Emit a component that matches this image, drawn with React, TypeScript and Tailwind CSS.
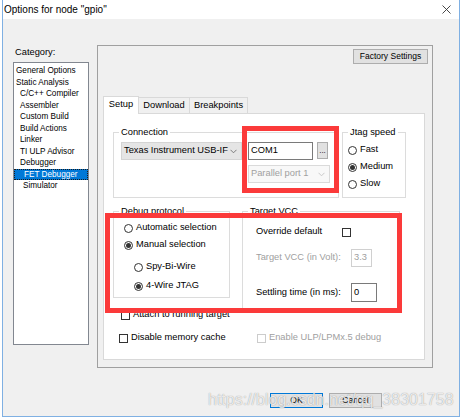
import React from 'react';

const categories: { label: string; level: number; selected?: boolean }[] = [
  { label: 'General Options', level: 0 },
  { label: 'Static Analysis', level: 0 },
  { label: 'C/C++ Compiler', level: 1 },
  { label: 'Assembler', level: 1 },
  { label: 'Custom Build', level: 1 },
  { label: 'Build Actions', level: 1 },
  { label: 'Linker', level: 1 },
  { label: 'TI ULP Advisor', level: 1 },
  { label: 'Debugger', level: 1 },
  { label: 'FET Debugger', level: 2, selected: true },
  { label: 'Simulator', level: 2 },
];

const indent = ['pl-[2px]', 'pl-[6px]', 'pl-[9px]'];

function Chevron({ light }: { light?: boolean }) {
  return (
    <svg width="7" height="5" viewBox="0 0 7 5" className="shrink-0">
      <path d="M0.5 0.8 L3.5 3.8 L6.5 0.8" fill="none" stroke={light ? '#c4c4c4' : '#707070'} strokeWidth="0.9" />
    </svg>
  );
}

function Radio({ label, checked }: { label: string; checked?: boolean }) {
  return (
    <div className="flex items-center h-[12px]">
      <span className="w-[9px] h-[9px] rounded-full border border-[#333] bg-white flex items-center justify-center shrink-0">
        {checked && <span className="w-[5px] h-[5px] rounded-full bg-[#333]" />}
      </span>
      <span className="ml-[3px] whitespace-nowrap">{label}</span>
    </div>
  );
}

function Check({ disabled }: { disabled?: boolean }) {
  return (
    <span
      className={`w-[9px] h-[9px] border bg-white shrink-0 ${disabled ? 'border-[#cccccc]' : 'border-[#333]'}`}
    />
  );
}

function Group({ label, className, children }: { label: string; className: string; children?: React.ReactNode }) {
  return (
    <div className={`relative border border-[#dcdcdc] shrink-0 ${className}`}>
      <span className="absolute left-[5px] top-[-7px] bg-white px-[2px] leading-[12px] whitespace-nowrap">{label}</span>
      {children}
    </div>
  );
}

export default function App() {
  return (
    <div className="relative w-[461px] h-[420px] bg-white overflow-hidden font-['Liberation_Sans',Arial,sans-serif] text-black">
      <div className="ml-[2px] w-[458px] h-[417px] border-x border-b border-[#7fb0e3] flex flex-col">
        {/* title bar */}
        <div className="h-[19px] bg-white flex items-center justify-between shrink-0">
          <span className="pl-[1px] text-[10px] leading-[19px]">Options for node "gpio"</span>
          <svg width="9" height="9" viewBox="0 0 9 9" className="mr-[8px]">
            <path d="M0.5 0.5 L8.5 8.5 M8.5 0.5 L0.5 8.5" stroke="#333" strokeWidth="0.9" />
          </svg>
        </div>

        {/* body */}
        <div className="flex-1 bg-[#f0f0f0] flex flex-col text-[9.3px]">
          <div className="flex pt-[26px]">
            {/* category column */}
            <div className="ml-[10px] w-[76px] pt-[1px] shrink-0">
              <div className="h-[13px] leading-[13px] pl-[2px]">Category:</div>
              <div className="mt-[3px] h-[283px] border border-[#828790] bg-white pt-[2px] text-[8.2px]">
                {categories.map((c) =>
                  c.selected ? (
                    <div
                      key={c.label}
                      className="mx-[0px] h-[11.5px] leading-[10px] bg-[#0078d7] text-white border border-dotted border-[#1a1a1a] pl-[9px] whitespace-nowrap"
                    >
                      {c.label}
                    </div>
                  ) : (
                    <div key={c.label} className={`h-[11.5px] leading-[11.5px] whitespace-nowrap ${indent[c.level]}`}>
                      {c.label}
                    </div>
                  )
                )}
              </div>
            </div>

            {/* options panel */}
            <div className="ml-[8px] w-[336px] h-[323px] border border-[#a0a0a0] flex flex-col shrink-0">
              <div className="flex justify-end pt-[3px] pr-[4px]">
                <div className="w-[75px] h-[15px] bg-[#e1e1e1] border border-[#adadad] flex items-center justify-center text-[8.5px]">
                  Factory Settings
                </div>
              </div>

              {/* tabs */}
              <div className="ml-[5px] mt-[31px] flex items-end h-[18px]">
                <div className="w-[36px] h-[18px] bg-white border-x border-t border-[#d9d9d9] flex items-center justify-center relative z-10 -mb-[1px] pb-[1px]">
                  Setup
                </div>
                <div className="w-[51px] h-[16px] bg-[#f0f0f0] border-t border-r border-[#d9d9d9] flex items-center justify-center">
                  Download
                </div>
                <div className="w-[58px] h-[16px] bg-[#f0f0f0] border-t border-r border-[#d9d9d9] flex items-center justify-center">
                  Breakpoints
                </div>
              </div>

              <div className="ml-[5px] w-[322px] h-[247px] bg-white border border-[#d9d9d9] flex flex-col">
                {/* row 1 */}
                <div className="flex mt-[18px]">
                  <Group label="Connection" className="ml-[9px] w-[226px] h-[66px]">
                    <div className="flex pl-[7px] pt-[9px]">
                      <div className="w-[121px] h-[18px] bg-[#e5e5e5] border border-[#d4d4d4] flex items-center justify-between pl-[2px] pr-[4px]">
                        <span className="whitespace-nowrap">Texas Instrument USB-IF</span>
                        <Chevron />
                      </div>
                      <div className="ml-[6px] flex flex-col">
                        <div className="flex items-start">
                          <div className="w-[65px] h-[18px] border border-[#7a7a7a] bg-white flex items-center pl-[2px]">COM1</div>
                          <div className="ml-[4px] w-[11px] h-[17px] bg-[#e1e1e1] border border-[#adadad] flex items-center justify-center text-[8px] leading-none">
                            ...
                          </div>
                        </div>
                        <div className="mt-[5px] w-[82px] h-[18px] bg-[#f8f8f8] border border-[#dadada] text-[#a0a0a0] flex items-center justify-between pl-[2px] pr-[4px]">
                          <span className="whitespace-nowrap">Parallel port 1</span>
                          <Chevron light />
                        </div>
                      </div>
                    </div>
                  </Group>
                  <Group label="Jtag speed" className="ml-[3px] w-[64px] h-[66px]">
                    <div className="flex flex-col pl-[5px] pt-[11px] gap-[5px]">
                      <Radio label="Fast" />
                      <Radio label="Medium" checked />
                      <Radio label="Slow" />
                    </div>
                  </Group>
                </div>

                {/* row 2 */}
                <div className="flex items-start mt-[13px]">
                  <Group label="Debug protocol" className="ml-[9px] w-[117px] h-[87px]">
                    <div className="flex flex-col pl-[10px] pt-[10px]">
                      <Radio label="Automatic selection" />
                      <div className="mt-[5px]">
                        <Radio label="Manual selection" checked />
                      </div>
                      <div className="mt-[10px] pl-[10px]">
                        <Radio label="Spy-Bi-Wire" />
                      </div>
                      <div className="mt-[7px] pl-[10px]">
                        <Radio label="4-Wire JTAG" checked />
                      </div>
                    </div>
                  </Group>
                  <Group label="Target VCC" className="ml-[12px] w-[158px] h-[98px]">
                    <div className="flex flex-col pl-[13px] pt-[11px]">
                      <div className="flex items-center h-[18px]">
                        <span className="w-[86px] whitespace-nowrap">Override default</span>
                        <Check />
                      </div>
                      <div className="flex items-center h-[18px] mt-[8px] text-[#a0a0a0]">
                        <span className="w-[95px] whitespace-nowrap">Target VCC (in Volt):</span>
                        <div className="w-[21px] h-[18px] border border-[#d0d0d0] flex items-center pl-[2px]">3.3</div>
                      </div>
                      <div className="flex items-center h-[19px] mt-[16px]">
                        <span className="w-[95px] whitespace-nowrap">Settling time (in ms):</span>
                        <div className="w-[26px] h-[19px] border border-[#7a7a7a] bg-white flex items-center pl-[2px]">0</div>
                      </div>
                    </div>
                  </Group>
                </div>

                {/* row 3 */}
                <div className="flex items-center h-[10px] mt-[1px] ml-[17px]">
                  <Check />
                  <span className="ml-[3px] whitespace-nowrap">Attach to running target</span>
                </div>

                {/* row 4 */}
                <div className="flex items-center h-[10px] mt-[13px] ml-[15px]">
                  <div className="w-[138px] flex items-center">
                    <Check />
                    <span className="ml-[3px] whitespace-nowrap">Disable memory cache</span>
                  </div>
                  <Check disabled />
                  <span className="ml-[3px] whitespace-nowrap text-[#a0a0a0]">Enable ULP/LPMx.5 debug</span>
                </div>
              </div>
            </div>
          </div>

          {/* buttons */}
          <div className="flex justify-end pr-[77px] mt-[25px] gap-[6px] text-[8.5px]">
            <div className="w-[53px] h-[15px] bg-[#e1e1e1] border border-[#0078d7] flex items-center justify-center">OK</div>
            <div className="w-[53px] h-[15px] bg-[#e1e1e1] border border-[#adadad] flex items-center justify-center">Cancel</div>
          </div>
        </div>
      </div>

      {/* annotation boxes */}
      <div className="absolute left-[242px] top-[126px] w-[97px] h-[67px] border-[5px] border-[#fb3a3a]" />
      <div className="absolute left-[105px] top-[213px] w-[297px] h-[100px] border-[5px] border-[#fb3a3a]" />

      {/* watermark */}
      <div className="absolute left-[208px] top-[391px] text-[16px] leading-[18px] text-white/80 whitespace-nowrap [text-shadow:0_0_1px_rgba(0,0,0,0.45)]">
        https://blog.csdn.net/qq_38301758
      </div>
    </div>
  );
}
